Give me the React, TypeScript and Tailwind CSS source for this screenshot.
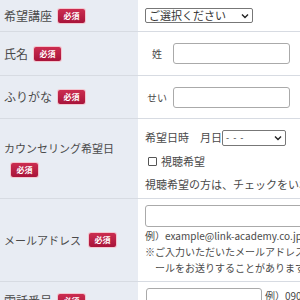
import React from "react";

const Badge = ({ className = "" }: { className?: string }) => (
  <span
    className={`inline-flex items-center justify-center w-[27px] h-[14px] rounded-[2px] bg-gradient-to-b from-[#cc2d50] to-[#a8133a] text-white text-[8px] font-bold leading-none shadow-[0_0_0_1px_#f3c6cf] ${className}`}
  >
    必須
  </span>
);

const Chevron = () => (
  <svg width="8" height="6" viewBox="0 0 8 6" className="shrink-0">
    <path d="M1 1.5 L4 4.5 L7 1.5" fill="none" stroke="#222" strokeWidth="1.4" />
  </svg>
);

const Row = ({
  h,
  label,
  children,
}: {
  h: string;
  label: React.ReactNode;
  children: React.ReactNode;
}) => (
  <div className={`flex border-b border-[#d7dbe2] ${h}`}>
    <div className="w-[138px] shrink-0 bg-[#e8ecf3] flex items-center pl-[4px]">
      {label}
    </div>
    <div className="flex-1 pl-[7px] flex flex-col justify-center">{children}</div>
  </div>
);

export default function App() {
  return (
    <div
      className="w-[300px] h-[300px] overflow-hidden bg-white text-[#4a4a4a] text-[11px]"
      style={{ fontFamily: '"Noto Sans CJK JP", "Noto Sans", sans-serif' }}
    >
      <div className="w-[360px]">
        <Row
          h="h-[32px]"
          label={
            <div className="flex items-center gap-[6px] text-[12px]">
              希望講座 <Badge />
            </div>
          }
        >
          <div className="w-[108px] h-[15px] border border-[#777] rounded-[2px] flex items-center justify-between px-[3px] text-[11px] text-[#333]">
            <span>ご選択ください</span>
            <Chevron />
          </div>
        </Row>

        <Row
          h="h-[44px]"
          label={
            <div className="flex items-center gap-[6px] text-[12px]">
              氏名 <Badge />
            </div>
          }
        >
          <div className="flex items-center">
            <span className="w-[28px] pl-[7px] text-[10px]">姓</span>
            <div className="w-[117px] h-[21px] border border-[#aaa] rounded-[3px] bg-white" />
          </div>
        </Row>

        <Row
          h="h-[43px]"
          label={
            <div className="flex items-center gap-[6px] text-[12px]">
              ふりがな <Badge />
            </div>
          }
        >
          <div className="flex items-center">
            <span className="w-[28px] pl-[2px] text-[10px]">せい</span>
            <div className="w-[117px] h-[21px] border border-[#aaa] rounded-[3px] bg-white" />
          </div>
        </Row>

        <Row
          h="h-[80px]"
          label={
            <div className="flex flex-col gap-[6px] text-[11px]">
              <span>カウンセリング希望日</span>
              <Badge className="ml-[7px]" />
            </div>
          }
        >
          <div className="flex flex-col gap-[7px] pt-[5px] whitespace-nowrap">
            <div className="flex items-center">
              <span>希望日時</span>
              <span className="ml-[11px]">月日</span>
              <div className="w-[64px] h-[16px] border border-[#777] rounded-[2px] flex items-center justify-between px-[3px]">
                <span className="text-[9px] tracking-[1px] text-[#333]">- - -</span>
                <Chevron />
              </div>
            </div>
            <div className="flex items-center pl-[3px]">
              <span className="w-[9px] h-[9px] border border-[#555] rounded-[1px] mr-[4px]" />
              <span>視聴希望</span>
            </div>
            <span>視聴希望の方は、チェックをいれてください。</span>
          </div>
        </Row>

        <Row
          h="h-[83px]"
          label={
            <div className="flex items-center gap-[8px] text-[11px]">
              メールアドレス <Badge />
            </div>
          }
        >
          <div className="flex flex-col whitespace-nowrap text-[10px] leading-[16px]">
            <div className="w-[200px] h-[22px] border border-[#aaa] rounded-[3px] bg-white mb-[1px]" />
            <span>例）example@link-academy.co.jp</span>
            <span>※ご入力いただいたメールアドレスにメ</span>
            <span className="pl-[10px]">ールをお送りすることがあります。</span>
          </div>
        </Row>

        <div className="flex h-[40px]">
          <div className="w-[138px] shrink-0 bg-[#e8ecf3] flex items-start pt-[10px] pl-[4px]">
            <div className="flex items-center gap-[6px] text-[12px]">
              電話番号 <Badge />
            </div>
          </div>
          <div className="flex-1 pl-[8px] pt-[6px] flex items-start">
            <div className="w-[116px] h-[22px] border border-[#aaa] rounded-[3px] bg-white" />
            <span className="ml-[3px] text-[10px]">例）090</span>
          </div>
        </div>
      </div>
    </div>
  );
}
